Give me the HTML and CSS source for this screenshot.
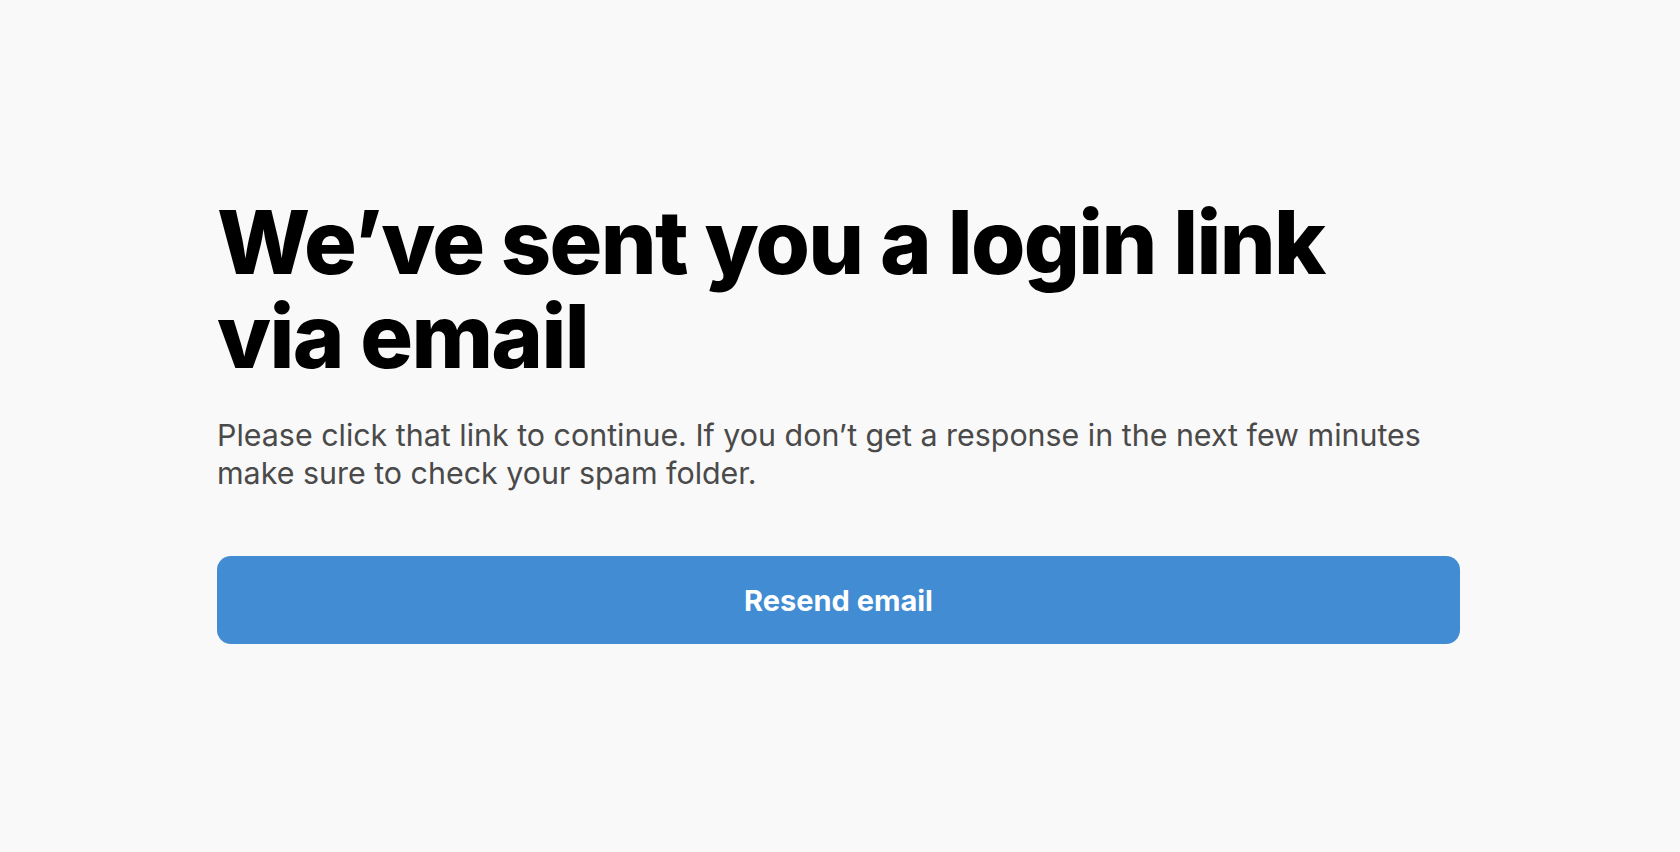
FILE: index.html
```html
<!DOCTYPE html>
<html lang="en">
<head>
<meta charset="utf-8">
<title>Check your email</title>
<link rel="stylesheet" href="styles.css">
</head>
<body>
<main class="page">
  <section class="panel">
    <h1 class="title">We’ve sent you a login link via email</h1>
    <p class="lead">Please click that link to continue. If you don’t get a response in the next few minutes make sure to check your spam folder.</p>
    <button class="resend" type="button">Resend email</button>
  </section>
</main>
</body>
</html>
```

FILE: styles.css
```css
html, body {
  margin: 0;
  padding: 0;
  background: #f9f9f9;
}
body {
  font-family: Inter, "Liberation Sans", sans-serif;
  color: #000;
}
.page {
  min-height: 852px;
  padding: 195px 0 0 217px;
  box-sizing: border-box;
}
.panel {
  width: 1243px;
  display: flex;
  flex-direction: column;
}
.title {
  margin: 0;
  font-size: 88px;
  line-height: 94px;
  font-weight: 800;
  letter-spacing: -1.7px;
  width: 1150px;
}
.lead {
  margin: 33px 0 0;
  font-size: 30.4px;
  line-height: 38px;
  color: #4a4a4a;
  width: 1240px;
}
.resend {
  margin-top: 64px;
  height: 88px;
  border: 0;
  border-radius: 14px;
  background: #418cd3;
  color: #fff;
  font-family: Inter, "Liberation Sans", sans-serif;
  font-size: 29px;
  font-weight: 700;
  cursor: pointer;
}
```
